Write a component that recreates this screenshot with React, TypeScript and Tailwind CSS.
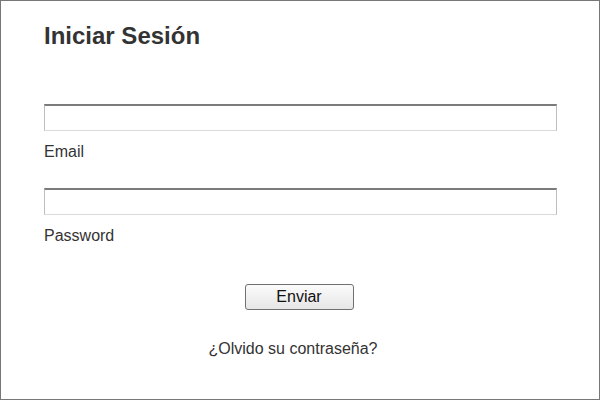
import React from 'react';

const Field: React.FC<{ label: string; type: string }> = ({ label, type }) => (
  <div className="flex flex-col">
    <input
      type={type}
      className="w-[513px] h-[27px] bg-white border-t-2 border-t-[#7b7b7b] border-x border-x-[#bdbdbd] border-b border-b-[#dadada] outline-none"
    />
    <label className="mt-[11px] text-[16px] leading-[20px] text-[#333]">{label}</label>
  </div>
);

export default function App() {
  return (
    <div
      className="w-[600px] h-[400px] bg-white border border-[#777] pt-[21px] pl-[43px] text-[#333]"
      style={{ fontFamily: '"Liberation Sans", Arial, sans-serif' }}
    >
      <h1 className="text-[24px] leading-[28px] font-bold text-[#333]">Iniciar Sesión</h1>

      <form className="mt-[54px] flex flex-col gap-[26px]" onSubmit={e => e.preventDefault()}>
        <Field label="Email" type="email" />
        <Field label="Password" type="password" />
      </form>

      <div className="w-[513px] flex flex-col items-center">
        <button
          type="button"
          className="mt-[38px] w-[109px] h-[26px] rounded-[3px] border border-[#707070] bg-gradient-to-b from-[#fbfbfb] to-[#e6e6e6] text-[16px] leading-[20px] text-[#111] mr-[3px]"
        >
          Enviar
        </button>
        <a href="#" className="mt-[29px] text-[16px] leading-[20px] text-[#333] mr-[15px]">
          ¿Olvido su contraseña?
        </a>
      </div>
    </div>
  );
}
